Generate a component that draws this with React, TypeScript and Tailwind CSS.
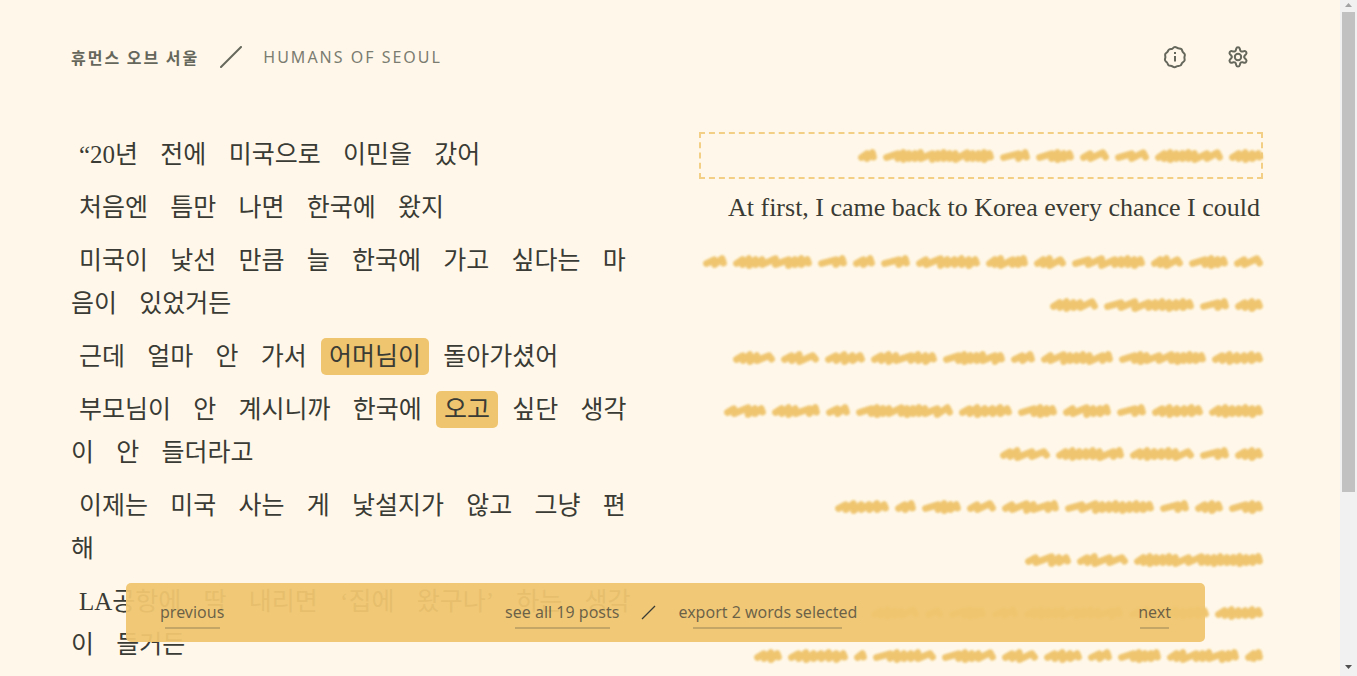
import React from "react";

type Word = { text: string; selected?: boolean };

const w = (line: string): Word[] =>
  line.split(" ").map((t) => (t.startsWith("*") ? { text: t.slice(1), selected: true } : { text: t }));

const korean: Word[][] = [
  w("“20년 전에 미국으로 이민을 갔어"),
  w("처음엔 틈만 나면 한국에 왔지"),
  w("미국이 낯선 만큼 늘 한국에 가고 싶다는 마음이 있었거든"),
  w("근데 얼마 안 가서 *어머님이 돌아가셨어"),
  w("부모님이 안 계시니까 한국에 *오고 싶단 생각이 안 들더라고"),
  w("이제는 미국 사는 게 낯설지가 않고 그냥 편해"),
  w("LA공항에 딱 내리면 ‘집에 왔구나’ 하는 생각이 들거든"),
];

// Every hidden word is a width and its strokes: "-" is a wide stroke, "i" a narrow one.
type Hidden = [number, string];
type Translation = { text: string } | { lines: Hidden[][]; focused?: boolean };

const translations: Translation[] = [
  {
    focused: true,
    lines: [[[19, "ii"], [111, "-iiii-iiii-iiii"], [30, "-i"], [38, "-iii"], [29, "i-"], [34, "--"], [68, "iiiiii--"], [34, "iiii"]]],
  },
  { text: "At first, I came back to Korea every chance I could" },
  {
    lines: [
      [[24, "ii"], [79, "iiii--iii"], [29, "-i"], [22, "ii"], [29, "-i"], [64, "i-iiiii"], [42, "ii-ii"], [32, "ii-"], [73, "---iiii"], [32, "ii-"], [39, "-iii"], [29, "i-"]],
      [[48, "iiii-"], [90, "---iiiiii"], [29, "-i"], [28, "iii"]],
    ],
  },
  { lines: [[[42, "iii-"], [38, "ii-"], [40, "iiii"], [66, "iii-iii"], [62, "-iiii-i"], [24, "ii"], [72, "i-iiii-i"], [87, "-ii--iiiii"], [51, "iiiiii"]]] },
  {
    lines: [
      [[42, "i-ii"], [48, "iii-i"], [24, "ii"], [97, "-iii-iiii--"], [53, "iiiiii"], [39, "-iii"], [48, "i-iii"], [29, "-i"], [51, "iiiiii"], [54, "iiiiiii"]],
      [[50, "ii--"], [68, "iiiiii-i"], [64, "iiiiii-"], [29, "-i"], [28, "iii"]],
    ],
  },
  { lines: [[[54, "iiiiii"], [21, "ii"], [39, "-iii"], [29, "i-"], [57, "i-i-i"], [89, "--iiiiiiii"], [29, "-i"], [28, "iii"], [34, "-ii"]]] },
  { lines: [[[46, "i-ii"], [51, "ii--"], [129, "iiiiii--iiiiiiiii"]]] },
  {
    lines: [
      [[48, "iiii-"], [18, "i"], [37, "-iii"], [26, "ii"], [99, "iiiii-iii-i"], [80, "ii-iiiiii"], [48, "iiiiii"]],
      [[28, "iii"], [60, "iiiiiii"], [13, "i"], [63, "-iiii-"], [54, "-iii-"], [36, "ii-"], [38, "iiii"], [24, "ii"], [43, "-iiii"], [72, "ii-ii-ii"], [18, "ii"]],
    ],
  },
];

function scribblePath(width: number, strokes: string) {
  const left = 3.5;
  const right = width - 3.5;
  const total = strokes.split("").reduce((sum, s) => sum + (s === "-" ? 2 : 1), 0);
  const unit = (right - left) / total;
  let x = left;
  let d = `M${left} 9`;
  strokes.split("").forEach((s, i) => {
    const last = i === strokes.length - 1;
    const span = unit * (s === "-" ? 2 : 1);
    const top = i % 3 === 1 ? 4.2 : 5.2;
    const low = i % 4 === 1 ? 11 : 10;
    const peak = x + span * (last ? 0.82 : s === "-" ? 0.98 : 0.9);
    x += span;
    const foot = last ? right : x - unit * 0.05;
    d += ` L${peak.toFixed(1)} ${top} L${foot.toFixed(1)} ${last ? 8.6 : low}`;
  });
  return d;
}

function Scribble({ width, strokes }: { width: number; strokes: string }) {
  return (
    <svg width={width} height={15} viewBox={`0 0 ${width} 15`} className="shrink-0 overflow-visible blur-[0.8px]" aria-hidden="true">
      <path
        d={scribblePath(width, strokes)}
        transform="translate(0 1.500)"
        fill="none"
        stroke="#efc570"
        strokeWidth="6.800"
        strokeLinecap="round"
        strokeLinejoin="round"
      />
    </svg>
  );
}

function InfoIcon() {
  return (
    <svg width="24" height="24" viewBox="0 0 24 24" fill="none" stroke="currentColor" strokeWidth="2" strokeLinecap="round" strokeLinejoin="round">
      <path d="M12 2c1.300 0 1.900.9 3.100 1.200 1.200.3 2.300.1 3.200.9.9.8.9 1.900 1.500 2.900.6 1 1.700 1.400 2 2.500.3 1.200-.4 2-.4 3.100s.6 2 .1 3.100c-.5 1.100-1.600 1.300-2.300 2.200-.7.9-.8 2-1.800 2.600-1 .6-2 .2-3.100.6-1.100.4-1.700 1.200-2.900 1.100-1.200 0-1.700-.9-2.800-1.200-1.100-.3-2.200 0-3.100-.8-.9-.8-.8-1.800-1.500-2.700-.7-.9-1.800-1.300-2-2.400-.3-1.200.4-1.900.4-3s-.6-2-.1-3.100c.5-1.100 1.500-1.300 2.200-2.200.7-.9.8-2 1.800-2.500 1-.6 2-.2 3.100-.6C10.100 2.900 10.800 2 12 2z" />
      <path strokeLinecap="butt" d="M12 11v5.500M12 7v2" />
    </svg>
  );
}

function GearIcon() {
  return (
    <svg width="24" height="24" viewBox="0 0 24 24" fill="none" stroke="currentColor" strokeWidth="2" strokeLinecap="round" strokeLinejoin="round">
      <circle cx="12" cy="12" r="3.200" />
      <path d="M10.200 3.700c.4-1.900 3.200-1.900 3.600 0l.3 1.300c.3 1.200 1.500 1.900 2.700 1.500l1.300-.4c1.800-.5 3.200 1.900 1.900 3.200l-1 .9c-.9.9-.9 2.500 0 3.400l1 .9c1.300 1.300-.1 3.700-1.900 3.200l-1.300-.4c-1.200-.4-2.400.3-2.700 1.500l-.3 1.300c-.4 1.900-3.200 1.900-3.600 0l-.3-1.300c-.3-1.200-1.500-1.900-2.700-1.500l-1.300.4c-1.800.5-3.200-1.900-1.900-3.200l1-.9c.9-.9.9-2.500 0-3.400l-1-.9C2.700 8 4.100 5.600 5.900 6.100l1.300.4c1.200.4 2.400-.3 2.700-1.500z" />
    </svg>
  );
}

function NavLink({ children, line }: { children: React.ReactNode; line: string }) {
  return (
    <a href="#" className="relative flex h-[59px] items-center pb-0.5 text-base text-[#3f3f38]/75">
      {children}
      <span className={`absolute inset-x-0 bottom-[13px] mx-auto h-[2px] bg-[#3f3f38]/25 ${line}`} />
    </a>
  );
}

export default function App() {
  return (
    <div className="flex h-screen overflow-hidden bg-[#fff8ea] font-['Noto_Sans','Noto_Sans_CJK_KR',sans-serif] text-[#3a3b34]">
      <div className="relative min-w-0 flex-1 overflow-hidden pr-[77px] pl-[71px]">
        <header className="flex h-[114px] items-center justify-between text-[#66675c]">
          <h1 className="flex items-center gap-[21px] text-base tracking-[2px]">
            <span className="font-['Noto_Sans_CJK_KR',sans-serif] font-bold">휴먼스 오브 서울</span>
            <svg width="22" height="22" viewBox="0 0 22 22" stroke="currentColor" strokeWidth="2" strokeLinecap="round" aria-hidden="true">
              <path d="M1 21L21 1" />
            </svg>
            <span className="font-normal text-[#7b7c71]">HUMANS OF SEOUL</span>
          </h1>
          <div className="flex gap-[39px] pr-[13px]">
            <button type="button" aria-label="About"><InfoIcon /></button>
            <button type="button" aria-label="Settings"><GearIcon /></button>
          </div>
        </header>

        <main className="grid grid-cols-2 gap-16 pt-[19px] font-['Liberation_Serif','Noto_Sans_CJK_KR',serif]">
          <div lang="ko" className="flex flex-col gap-[10px] text-[25px] leading-[43px]">
            {korean.map((line, i) => (
              <p key={i} className="break-all">
                {line.map((word, j) => (
                  <React.Fragment key={j}>
                    <span className={word.selected ? "rounded-[5px] bg-[#efc570] px-2 py-[5px]" : "px-2"}>{word.text}</span>{" "}
                  </React.Fragment>
                ))}
              </p>
            ))}
          </div>
          <div className="flex flex-col gap-[10px]">
            {translations.map((row, i) =>
              "text" in row ? (
                <p key={i} className="pr-[3px] text-right text-[26px] leading-[43px]">{row.text}</p>
              ) : (
                <div key={i} className={row.focused ? "-mt-px -mb-[3px] pt-px pb-[3px] outline-2 -outline-offset-2 outline-dashed outline-[#f3cf85]" : ""}>
                  {row.lines.map((line, j) => (
                    <div key={j} className="flex h-[43px] items-center justify-end gap-[6px]">
                      {line.map(([width, strokes], k) => (
                        <Scribble key={k} width={width} strokes={strokes} />
                      ))}
                    </div>
                  ))}
                </div>
              ),
            )}
          </div>
        </main>

        <nav className="absolute right-[135px] bottom-[34px] left-[126px] flex items-center justify-between rounded-[5px] bg-[#efc570]/95 px-[34px]">
          <NavLink line="w-[55px]">previous</NavLink>
          <div className="flex items-center gap-[22px]">
            <NavLink line="w-[95px]">see all 19 posts</NavLink>
            <svg width="15" height="15" viewBox="0 0 15 15" stroke="currentColor" strokeWidth="1.200" aria-hidden="true">
              <path d="M1 14L14 1" />
            </svg>
            <NavLink line="w-[149px]">export 2 words selected</NavLink>
          </div>
          <NavLink line="w-[29px]">next</NavLink>
        </nav>
      </div>

      <div className="flex w-[17px] shrink-0 flex-col items-center justify-between bg-[#f1f1f1]" aria-hidden="true">
        <div className="flex w-full flex-col items-center">
          <svg width="17" height="12" viewBox="0 0 17 12" fill="#a3a3a3"><path d="M5 7h7L8.500 3z" /></svg>
          <div className="h-[480px] w-[13px] bg-[#c1c1c1]" />
        </div>
        <svg width="17" height="17" viewBox="0 0 17 17" fill="#505050"><path d="M5 6h7L8.500 10z" /></svg>
      </div>
    </div>
  );
}
